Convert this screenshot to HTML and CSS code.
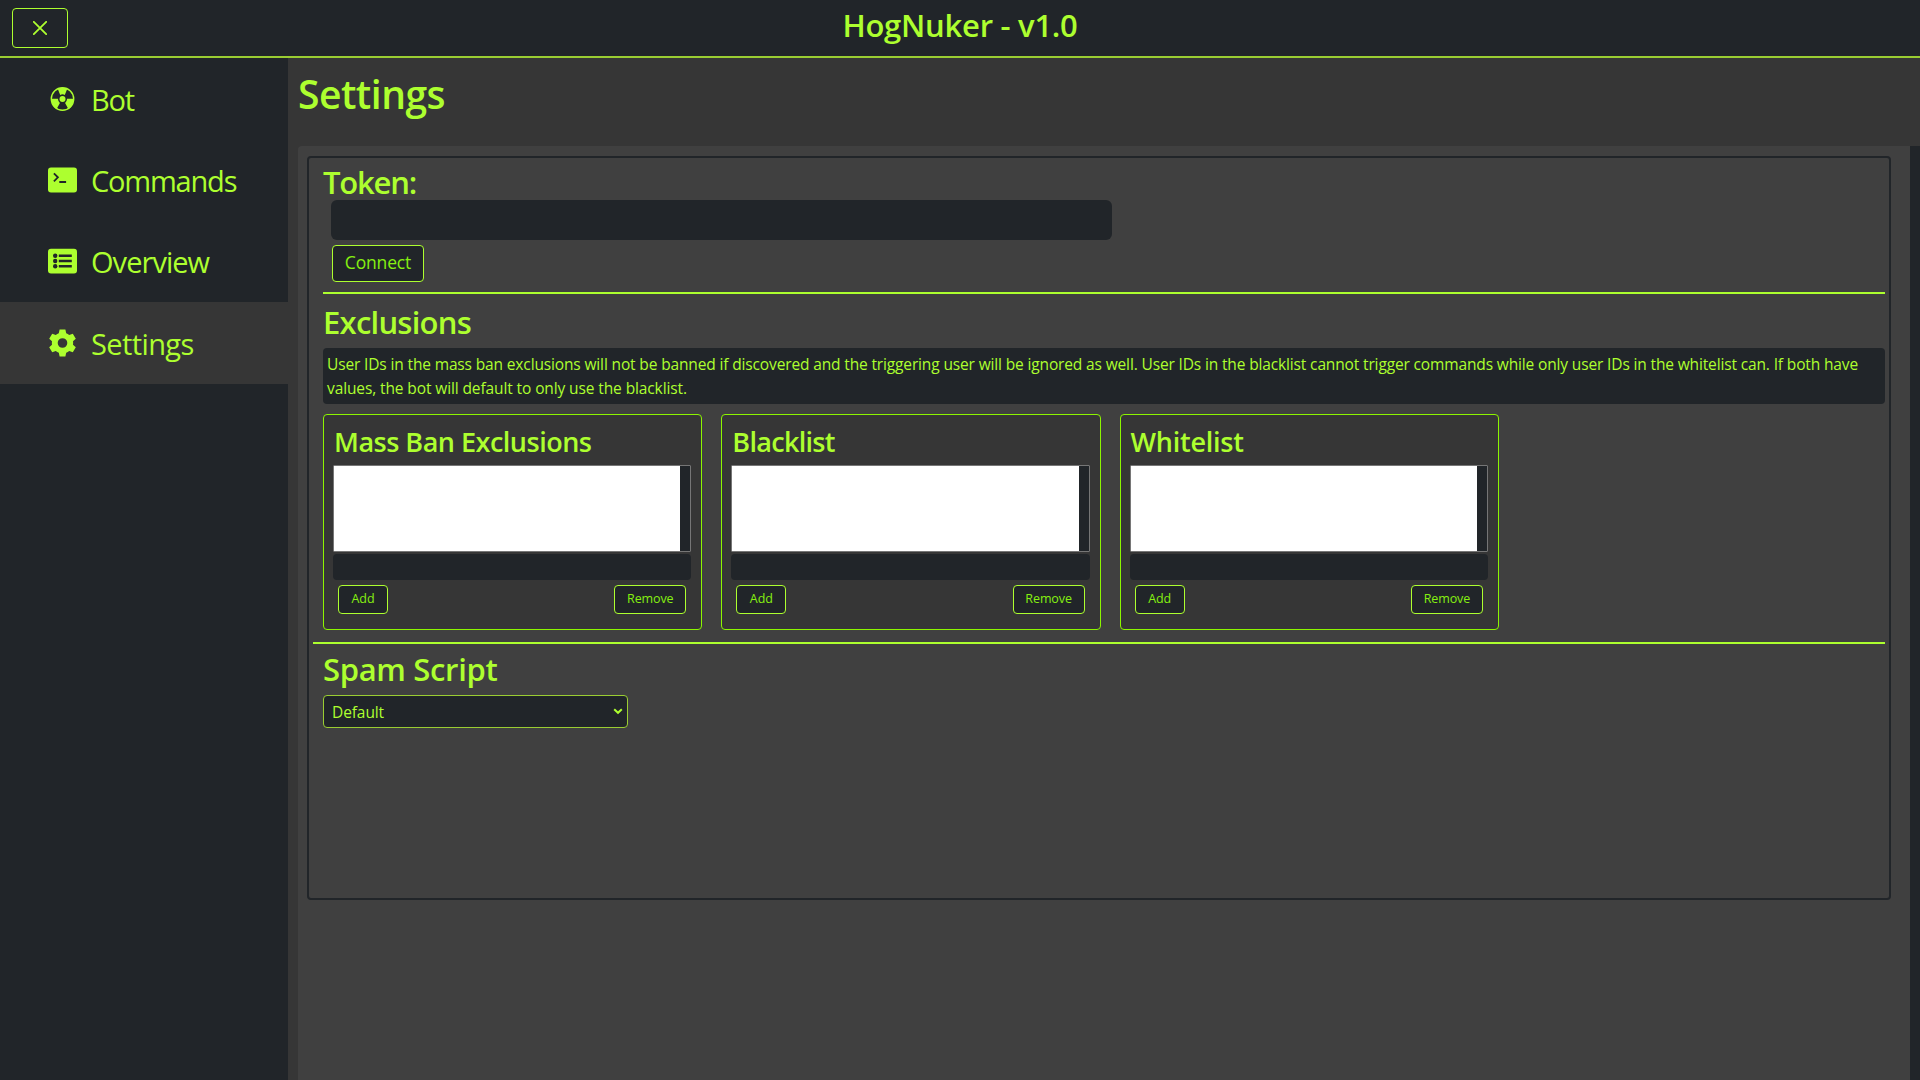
FILE: index.html
```html
<!DOCTYPE html>
<html lang="en">
<head>
<meta charset="utf-8">
<title>HogNuker - v1.0</title>
<link rel="stylesheet" href="styles.css">
</head>
<body>
<header class="topbar">
  <button class="btn close" aria-label="Close"><svg width="14" height="14" viewBox="0 0 14 14"><path d="M.8.8l12.4 12.4M13.2.8L.8 13.2" fill="none" stroke="currentColor" stroke-width="1.8" stroke-linecap="round"/></svg></button>
  <h2 class="brand">HogNuker - v1.0</h2>
</header>
<div class="shell">
  <nav class="sidebar">
    <a class="item"><svg class="icon" viewBox="0 0 30 30"><circle cx="15" cy="15" r="11.2" fill="none" stroke="currentColor" stroke-width="1.4"/><circle cx="15" cy="15" r="3" fill="currentColor"/><path d="M10.2 4.8Q15 2.8 19.8 4.8L17.3 10.9Q15 9.8 12.7 10.9Z" fill="currentColor"/><path d="M3.8 14.8H10.4Q10.5 17.4 12.4 19L9 25.2Q4 21.4 3.8 14.8Z" fill="currentColor"/><path d="M26.2 14.8H19.6Q19.5 17.4 17.6 19L21 25.2Q26 21.4 26.2 14.8Z" fill="currentColor"/></svg><span class="t-bot">Bot</span></a>
    <a class="item"><svg class="icon" viewBox="0 0 30 30"><rect x=".5" y="2.5" width="29" height="25" rx="3" fill="currentColor"/><path d="M6.4 8.3l4 4-4 4M11.8 17h6.8" class="cut"/></svg><span class="t-com">Commands</span></a>
    <a class="item"><svg class="icon" viewBox="0 0 30 30"><rect x=".5" y="2.8" width="29" height="24.6" rx="3" fill="currentColor"/><g class="hole"><circle cx="7.7" cy="9.8" r="2.2"/><circle cx="7.7" cy="15" r="2.2"/><circle cx="7.7" cy="20.2" r="2.2"/><path d="M11.3 8.4h13v2.6h-13zM11.3 13.7h13v2.6h-13zM11.3 19h13v2.6h-13z"/></g></svg><span class="t-ove">Overview</span></a>
    <a class="item active"><svg class="icon" viewBox="0 0 30 30"><path fill="currentColor" fill-rule="evenodd" d="M12.1 1.4h5.8l.8 3.8q1.6.6 3 1.7l3.6-1.2 3 5-2.8 2.6q.3 1.7 0 3.4l2.8 2.6-3 5-3.6-1.2q-1.4 1.1-3 1.7l-.8 3.8h-5.8l-.8-3.8q-1.6-.6-3-1.7l-3.6 1.2-3-5 2.8-2.6q-.3-1.7 0-3.4l-2.8-2.6 3-5 3.6 1.2q1.4-1.1 3-1.7zM15 10.2a4.8 4.8 0 100 9.6 4.8 4.8 0 000-9.6z"/></svg><span class="t-set">Settings</span></a>
  </nav>
  <main class="main">
    <h1 class="title">Settings</h1>
    <div class="scroll">
      <div class="content">
        <div class="panel">
          <section class="token">
            <h2 class="h-token">Token:</h2>
            <input class="field token-input" type="text">
            <button class="btn connect">Connect</button>
          </section>
          <hr class="rule inset">
          <section class="excl">
            <h2 class="h-excl">Exclusions</h2>
            <p class="note"><span class="n1">User IDs in the mass ban exclusions will not be banned if discovered and the triggering user will be ignored as well. User IDs in the blacklist cannot trigger commands while only user IDs in the whitelist can. If both have</span><br><span class="n2">values, the bot will default to only use the blacklist.</span></p>
            <div class="cards">
              <div class="card"><h3 class="h-mass">Mass Ban Exclusions</h3><div class="list"></div><input class="field small" type="text"><div class="actions"><button class="btn mini add">Add</button><button class="btn mini remove">Remove</button></div></div>
              <div class="card"><h3 class="h-black">Blacklist</h3><div class="list"></div><input class="field small" type="text"><div class="actions"><button class="btn mini add">Add</button><button class="btn mini remove">Remove</button></div></div>
              <div class="card"><h3 class="h-white">Whitelist</h3><div class="list"></div><input class="field small" type="text"><div class="actions"><button class="btn mini add">Add</button><button class="btn mini remove">Remove</button></div></div>
            </div>
          </section>
          <hr class="rule">
          <section class="spam">
            <h2 class="h-spam">Spam Script</h2>
            <div class="select"><span>Default</span><svg width="10" height="7" viewBox="0 0 10 7"><path d="M1.2 1.2L5 4.8l3.8-3.6" fill="none" stroke="currentColor" stroke-width="2"/></svg></div>
          </section>
        </div>
      </div>
      <div class="track"></div>
    </div>
  </main>
</div>
</body>
</html>
```
FILE: styles.css
```css
* { box-sizing: border-box; margin: 0; }
body { height: 1080px; overflow: hidden; display: flex; flex-direction: column; background: #363636; color: greenyellow; font: 16px/24px "Open Sans", "Noto Sans", sans-serif; }
h1, h2, h3 { font-weight: 600; white-space: nowrap; }
.topbar { height: 58px; flex: none; display: grid; grid-template-columns: 1fr auto 1fr; padding: 8px 12px 0; background: #212529; border-bottom: 2px solid yellowgreen; }
.btn { font-family: inherit; padding: 0; background: #212529; color: greenyellow; border: 1px solid greenyellow; border-radius: 4px; display: flex; align-items: center; justify-content: center; white-space: nowrap; }
.close { width: 56px; height: 40px; }
h2 { font-size: 31px; line-height: 38px; }
.brand { margin-top: -2px; letter-spacing: -.25px; }
.shell { flex: 1; display: flex; min-height: 0; }
.sidebar { flex: none; width: 288px; background: #212529; }
.item { height: 81.4px; display: flex; align-items: center; padding-left: 47px; font-size: 29px; white-space: nowrap; }
.item span { padding-top: 2px; }
.icon { width: 31px; height: 30px; margin-right: 13px; }
.active { background: #363636; }
.t-bot { letter-spacing: -1.2px; }
.t-com { letter-spacing: -1.2px; }
.t-ove { letter-spacing: -.95px; }
.t-set { letter-spacing: -.6px; }
.cut { fill: none; stroke: #212529; stroke-width: 1.8; }
.hole { fill: #212529; }
.main { flex: 1; min-width: 0; display: flex; flex-direction: column; padding-left: 10px; }
.title { height: 88px; font-size: 39px; line-height: 48px; padding-top: 12px; letter-spacing: -.5px; }
.scroll { flex: 1; display: flex; }
.content { flex: 1; min-width: 0; background: #404040; border-top-left-radius: 4px; padding: 10px 19px 0 9px; }
.track { flex: none; width: 10px; background: #212529; }
.panel { height: 744px; border: 2px solid #212529; border-radius: 4px; padding: 0 4px; }
.token { height: 134px; padding: 5px 10px 0; }
.h-token { height: 37px; letter-spacing: -1.2px; }
.field { display: block; border: 0; background: #212529; border-radius: 6px; padding: 0; }
.token-input { width: 781px; height: 40px; margin-left: 8px; }
.connect { width: 92px; height: 37px; margin: 5px 0 0 9px; padding-bottom: 4px; font-size: 17.5px; letter-spacing: -.15px; color: #86f010; }
.rule { border: 0; height: 2px; background: greenyellow; }
.inset { margin-left: 10px; }
.excl { height: 348px; padding: 9px 0 0 10px; }
.h-excl { letter-spacing: -.75px; }
.note { height: 56px; margin-top: 7px; padding: 4px; background: #212529; border-radius: 4px; font-size: 15.5px; white-space: nowrap; }
.n1 { letter-spacing: -.141px; }
.n2 { letter-spacing: -.11px; }
.cards { display: flex; gap: 19px; margin-top: 10px; }
.card { width: 379.3px; height: 216px; background: #363636; border: 1px solid #8cf500; border-radius: 4px; padding: 10px 10px 0 9px; }
h3 { font-size: 27px; line-height: 34px; height: 40px; padding-left: 1px; }
.h-mass { letter-spacing: -.5px; }
.h-black { letter-spacing: -.7px; }
.h-white { letter-spacing: -.25px; }
.list { height: 87px; border: 1px solid #767676; border-radius: 1px; background: linear-gradient(90deg, #fff calc(100% - 10px), #212529 0); }
.small { width: 100%; height: 26px; margin-top: 2px; border-radius: 4px; }
.actions { display: flex; justify-content: space-between; padding: 5px 5px 0; }
.mini { height: 29px; font-size: 12.5px; letter-spacing: -.1px; color: #86f010; padding-bottom: 2px; }
.add { width: 50px; }
.remove { width: 72px; }
.spam { padding: 6px 10px 0; }
.h-spam { letter-spacing: -.33px; }
.select { width: 305px; height: 33px; margin-top: 7px; padding: 1px 4px 0 8px; display: flex; align-items: center; justify-content: space-between; background: #212529; border: 1px solid yellowgreen; border-radius: 4px; font-size: 15.5px; letter-spacing: -.1px; }
.select svg { margin-top: -2px; }
```
